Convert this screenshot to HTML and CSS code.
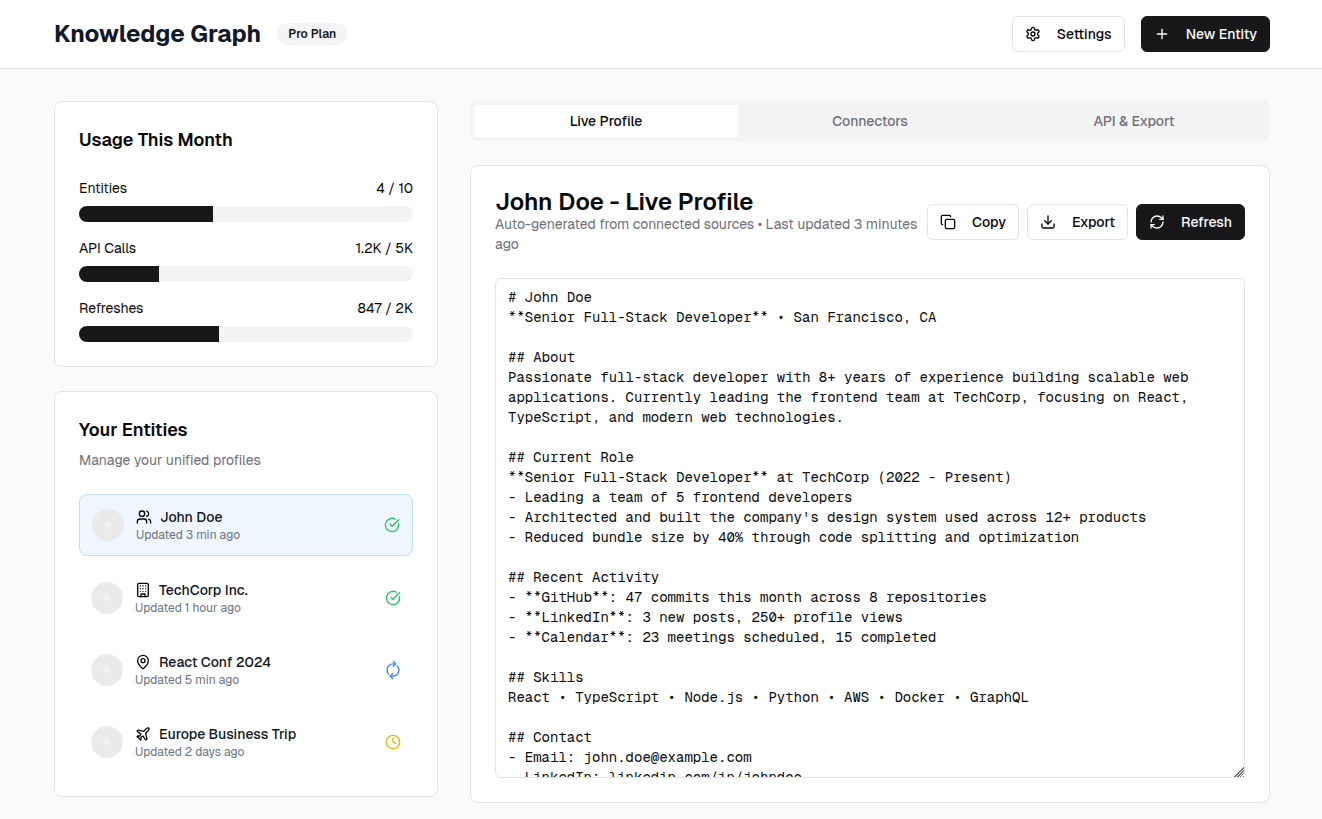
FILE: index.html
```html
<!DOCTYPE html>
<html lang="en">

<head>
    <meta charset="UTF-8">
    <meta name="viewport" content="width=device-width, initial-scale=1.0">
    <title>Knowledge Graph</title>
    <link rel="stylesheet" href="styles.css">
</head>

<body>
    <header class="topbar">
        <div class="container topbar-inner">
            <div class="brand">
                <h1>Knowledge Graph</h1>
                <span class="badge">Pro Plan</span>
            </div>
            <div class="topbar-actions">
                <button type="button" class="btn">
                    <svg class="icon" viewBox="0 0 24 24"><path d="M12.22 2h-.44a2 2 0 0 0-2 2v.18a2 2 0 0 1-1 1.73l-.43.25a2 2 0 0 1-2 0l-.15-.08a2 2 0 0 0-2.73.73l-.22.38a2 2 0 0 0 .73 2.73l.15.1a2 2 0 0 1 1 1.72v.51a2 2 0 0 1-1 1.74l-.15.09a2 2 0 0 0-.73 2.73l.22.38a2 2 0 0 0 2.73.73l.15-.08a2 2 0 0 1 2 0l.43.25a2 2 0 0 1 1 1.73V20a2 2 0 0 0 2 2h.44a2 2 0 0 0 2-2v-.18a2 2 0 0 1 1-1.73l.43-.25a2 2 0 0 1 2 0l.15.08a2 2 0 0 0 2.73-.73l.22-.39a2 2 0 0 0-.73-2.73l-.15-.08a2 2 0 0 1-1-1.74v-.5a2 2 0 0 1 1-1.74l.15-.09a2 2 0 0 0 .73-2.73l-.22-.38a2 2 0 0 0-2.73-.73l-.15.08a2 2 0 0 1-2 0l-.43-.25a2 2 0 0 1-1-1.73V4a2 2 0 0 0-2-2z"/><circle cx="12" cy="12" r="3"/></svg>
                    Settings
                </button>
                <button type="button" class="btn btn-primary">
                    <svg class="icon" viewBox="0 0 24 24"><path d="M5 12h14"/><path d="M12 5v14"/></svg>
                    New Entity
                </button>
            </div>
        </div>
    </header>

    <main class="container layout">
        <aside class="sidebar">
            <section class="card">
                <h2>Usage This Month</h2>
                <div class="usage">
                    <div class="usage-item">
                        <div class="usage-row"><span id="entities">Entities</span><span>4 / 10</span></div>
                        <div class="bar" role="progressbar" aria-labelledby="entities" aria-valuenow="40">
                            <div class="bar-fill" style="width: 40%"></div>
                        </div>
                    </div>
                    <div class="usage-item">
                        <div class="usage-row"><span id="calls">API Calls</span><span>1.2K / 5K</span></div>
                        <div class="bar" role="progressbar" aria-labelledby="calls" aria-valuenow="24">
                            <div class="bar-fill" style="width: 24%"></div>
                        </div>
                    </div>
                    <div class="usage-item">
                        <div class="usage-row"><span id="refreshes">Refreshes</span><span>847 / 2K</span></div>
                        <div class="bar" role="progressbar" aria-labelledby="refreshes" aria-valuenow="42">
                            <div class="bar-fill" style="width: 42%"></div>
                        </div>
                    </div>
                </div>
            </section>

            <section class="card">
                <h2>Your Entities</h2>
                <p class="muted entities-note">Manage your unified profiles</p>
                <ul class="entities">
                    <li class="entity selected">
                        <span class="avatar"></span>
                        <div class="entity-text">
                            <div class="entity-name">
                                <svg class="icon" viewBox="0 0 24 24"><path d="M16 21v-2a4 4 0 0 0-4-4H6a4 4 0 0 0-4 4v2"/><circle cx="9" cy="7" r="4"/><path d="M22 21v-2a4 4 0 0 0-3-3.87"/><path d="M16 3.13a4 4 0 0 1 0 7.75"/></svg>
                                <span>John Doe</span>
                            </div>
                            <p>Updated 3 min ago</p>
                        </div>
                        <svg class="icon ok" viewBox="0 0 24 24"><path d="M21.801 10A10 10 0 1 1 17 3.335"/><path d="m9 11 3 3L22 4"/></svg>
                    </li>
                    <li class="entity">
                        <span class="avatar"></span>
                        <div class="entity-text">
                            <div class="entity-name">
                                <svg class="icon" viewBox="0 0 24 24"><rect x="4" y="2" width="16" height="20" rx="2"/><path d="M9 22v-4h6v4"/><path d="M8 6h.01M16 6h.01M12 6h.01M12 10h.01M12 14h.01M16 10h.01M16 14h.01M8 10h.01M8 14h.01"/></svg>
                                <span>TechCorp Inc.</span>
                            </div>
                            <p>Updated 1 hour ago</p>
                        </div>
                        <svg class="icon ok" viewBox="0 0 24 24"><path d="M21.801 10A10 10 0 1 1 17 3.335"/><path d="m9 11 3 3L22 4"/></svg>
                    </li>
                    <li class="entity">
                        <span class="avatar"></span>
                        <div class="entity-text">
                            <div class="entity-name">
                                <svg class="icon" viewBox="0 0 24 24"><path d="M20 10c0 4.993-5.539 10.193-7.399 11.799a1 1 0 0 1-1.202 0C9.539 20.193 4 14.993 4 10a8 8 0 0 1 16 0"/><circle cx="12" cy="10" r="3"/></svg>
                                <span>React Conf 2024</span>
                            </div>
                            <p>Updated 5 min ago</p>
                        </div>
                        <svg class="icon syncing" viewBox="0 0 24 24"><g transform="rotate(-42 12 12)"><path d="M3 12a9 9 0 0 1 9-9 9.75 9.75 0 0 1 6.74 2.74L21 8"/><path d="M21 3v5h-5"/><path d="M21 12a9 9 0 0 1-9 9 9.75 9.75 0 0 1-6.74-2.74L3 16"/><path d="M8 16H3v5"/></g></svg>
                    </li>
                    <li class="entity">
                        <span class="avatar"></span>
                        <div class="entity-text">
                            <div class="entity-name">
                                <svg class="icon" viewBox="0 0 24 24"><path d="M17.8 19.2 16 11l3.5-3.5C21 6 21.5 4 21 3c-1-.5-3 0-4.5 1.5L13 8 4.8 6.2c-.5-.1-.9.1-1.1.5l-.3.5c-.2.5-.1 1 .3 1.3L9 12l-2 3H4l-1 1 3 2 2 3 1-1v-3l3-2 3.5 5.3c.3.4.8.5 1.3.3l.5-.2c.4-.3.6-.7.5-1.2z"/></svg>
                                <span>Europe Business Trip</span>
                            </div>
                            <p>Updated 2 days ago</p>
                        </div>
                        <svg class="icon pending" viewBox="0 0 24 24"><circle cx="12" cy="12" r="10"/><path d="M12 6v6l4 2"/></svg>
                    </li>
                </ul>
            </section>
        </aside>

        <div class="content">
            <div class="tabs" role="tablist">
                <button type="button" class="tab active" role="tab" aria-selected="true">Live Profile</button>
                <button type="button" class="tab" role="tab" aria-selected="false">Connectors</button>
                <button type="button" class="tab" role="tab" aria-selected="false">API &amp; Export</button>
            </div>

            <section class="card">
                <div class="profile-head">
                    <div>
                        <h2 class="profile-title">John Doe - Live Profile</h2>
                        <p class="muted">Auto-generated from connected sources • Last updated 3 minutes ago</p>
                    </div>
                    <div class="profile-actions">
                        <button type="button" class="btn">
                            <svg class="icon" viewBox="0 0 24 24"><rect x="8" y="8" width="14" height="14" rx="2"/><path d="M4 16c-1.1 0-2-.9-2-2V4c0-1.1.9-2 2-2h10c1.1 0 2 .9 2 2"/></svg>
                            Copy
                        </button>
                        <button type="button" class="btn">
                            <svg class="icon" viewBox="0 0 24 24"><path d="M21 15v4a2 2 0 0 1-2 2H5a2 2 0 0 1-2-2v-4"/><path d="m7 10 5 5 5-5"/><path d="M12 15V3"/></svg>
                            Export
                        </button>
                        <button type="button" class="btn btn-primary">
                            <svg class="icon" viewBox="0 0 24 24"><path d="M3 12a9 9 0 0 1 9-9 9.75 9.75 0 0 1 6.74 2.74L21 8"/><path d="M21 3v5h-5"/><path d="M21 12a9 9 0 0 1-9 9 9.75 9.75 0 0 1-6.74-2.74L3 16"/><path d="M8 16H3v5"/></svg>
                            Refresh
                        </button>
                    </div>
                </div>
                <textarea class="profile-text" aria-label="Live profile" spellcheck="false"># John Doe
**Senior Full-Stack Developer** • San Francisco, CA

## About
Passionate full-stack developer with 8+ years of experience building scalable web applications. Currently leading the frontend team at TechCorp, focusing on React, TypeScript, and modern web technologies.

## Current Role
**Senior Full-Stack Developer** at TechCorp (2022 - Present)
- Leading a team of 5 frontend developers
- Architected and built the company's design system used across 12+ products
- Reduced bundle size by 40% through code splitting and optimization

## Recent Activity
- **GitHub**: 47 commits this month across 8 repositories
- **LinkedIn**: 3 new posts, 250+ profile views
- **Calendar**: 23 meetings scheduled, 15 completed

## Skills
React • TypeScript • Node.js • Python • AWS • Docker • GraphQL

## Contact
- Email: john.doe@example.com
- LinkedIn: linkedin.com/in/johndoe</textarea>
            </section>
        </div>
    </main>
</body>

</html>
```
FILE: styles.css
```css
* {
    box-sizing: border-box;
}

body {
    margin: 0;
    font-family: Geist, Inter, "Liberation Sans", sans-serif;
    font-size: 14px;
    line-height: 20px;
    color: #09090b;
    background-color: #f9fafb;
}

h1,
h2,
p,
ul {
    margin: 0;
    padding: 0;
}

.container {
    max-width: 1282px;
    margin: 0 auto;
    padding: 0 32px 0 34px;
}

/* header */
.topbar {
    background-color: #fff;
    border-bottom: 1px solid #e4e4e7;
}

.topbar-inner {
    display: flex;
    align-items: center;
    justify-content: space-between;
    padding-top: 16px;
    padding-bottom: 16px;
}

.brand,
.topbar-actions {
    display: flex;
    align-items: center;
    gap: 16px;
}

h1 {
    font-size: 24px;
    line-height: 32px;
    font-weight: 700;
    color: #111827;
}

.badge {
    padding: 3px 11px;
    border-radius: 11px;
    background-color: #f4f4f5;
    color: #18181b;
    font-size: 12px;
    line-height: 16px;
    font-weight: 600;
}

.icon {
    flex: none;
    width: 16px;
    height: 16px;
    fill: none;
    stroke: currentColor;
    stroke-width: 2;
    stroke-linecap: round;
    stroke-linejoin: round;
    overflow: visible;
}

.btn {
    display: flex;
    align-items: center;
    gap: 16px;
    height: 36px;
    padding: 0 12px;
    border: 1px solid #e4e4e7;
    border-radius: 6px;
    background-color: #fff;
    color: #09090b;
    font: inherit;
    font-weight: 500;
    white-space: nowrap;
    cursor: pointer;
}

.btn-primary {
    border-color: #18181b;
    background-color: #18181b;
    color: #fafafa;
}

/* page grid */
.layout {
    display: grid;
    grid-template-columns: repeat(3, minmax(0, 1fr));
    gap: 32px;
    padding-top: 32px;
    padding-bottom: 32px;
    align-items: start;
}

.content {
    grid-column: span 2;
}

.sidebar,
.content {
    display: flex;
    flex-direction: column;
    gap: 24px;
}

.card {
    padding: 24px;
    border: 1px solid #e4e4e7;
    border-radius: 8px;
    background-color: #fff;
}

h2 {
    font-size: 18px;
    line-height: 28px;
    font-weight: 600;
}

.muted {
    color: #71717a;
}

/* usage */
.usage {
    display: flex;
    flex-direction: column;
    gap: 16px;
    margin-top: 24px;
}

.usage-row {
    display: flex;
    justify-content: space-between;
    margin-bottom: 8px;
}

.bar {
    height: 16px;
    border-radius: 8px;
    background-color: #f4f4f5;
    overflow: hidden;
}

.bar-fill {
    height: 100%;
    background-color: #18181b;
}

/* entities */
.entities-note {
    margin-top: 6px;
}

.entities {
    display: flex;
    flex-direction: column;
    gap: 12px;
    margin-top: 24px;
    list-style: none;
}

.entity {
    display: flex;
    align-items: center;
    gap: 12px;
    padding: 12px;
    border-radius: 8px;
    cursor: pointer;
}

.entity.selected {
    border: 1px solid #bfdbfe;
    background-color: #eff6ff;
}

.avatar {
    flex: none;
    width: 32px;
    height: 32px;
    border-radius: 50%;
    background: radial-gradient(circle, #f4f4f4 1px, #eaeaea 4px);
}

.entity-text {
    flex: 1;
    min-width: 0;
}

.entity-name {
    display: flex;
    align-items: center;
    gap: 8px;
}

.entity-name span {
    font-weight: 500;
    color: #111827;
}

.entity-text p {
    font-size: 12px;
    line-height: 16px;
    color: #6b7280;
}

.ok {
    color: #22c55e;
}

.syncing {
    color: #3b82f6;
}

.pending {
    color: #eab308;
}

/* tabs */
.tabs {
    display: grid;
    grid-template-columns: repeat(3, 1fr);
    padding: 4px;
    border-radius: 6px;
    background-color: #f4f4f5;
}

.tab {
    height: 32px;
    border: none;
    border-radius: 2px;
    background: none;
    color: #71717a;
    font: inherit;
    font-weight: 500;
    cursor: pointer;
}

.tab.active {
    background-color: #fff;
    color: #09090b;
}

/* profile */
.profile-head {
    display: flex;
    align-items: center;
    justify-content: space-between;
}

.profile-title {
    font-size: 24px;
    line-height: 24px;
}

.profile-actions {
    display: flex;
    gap: 8px;
}

.profile-text {
    display: block;
    width: 100%;
    height: 500px;
    margin-top: 24px;
    padding: 8px 12px;
    border: 1px solid #e4e4e7;
    border-radius: 6px;
    background-color: #fff;
    color: #09090b;
    font-family: "Geist Mono", "Liberation Mono", monospace;
    font-size: 14px;
    line-height: 20px;
    resize: vertical;
}

.profile-text::-webkit-resizer {
    background:
        linear-gradient(135deg, #fff 62%, transparent 62%),
        repeating-linear-gradient(135deg, #71717a 0 1px, #fff 1px 2px);
}
```
